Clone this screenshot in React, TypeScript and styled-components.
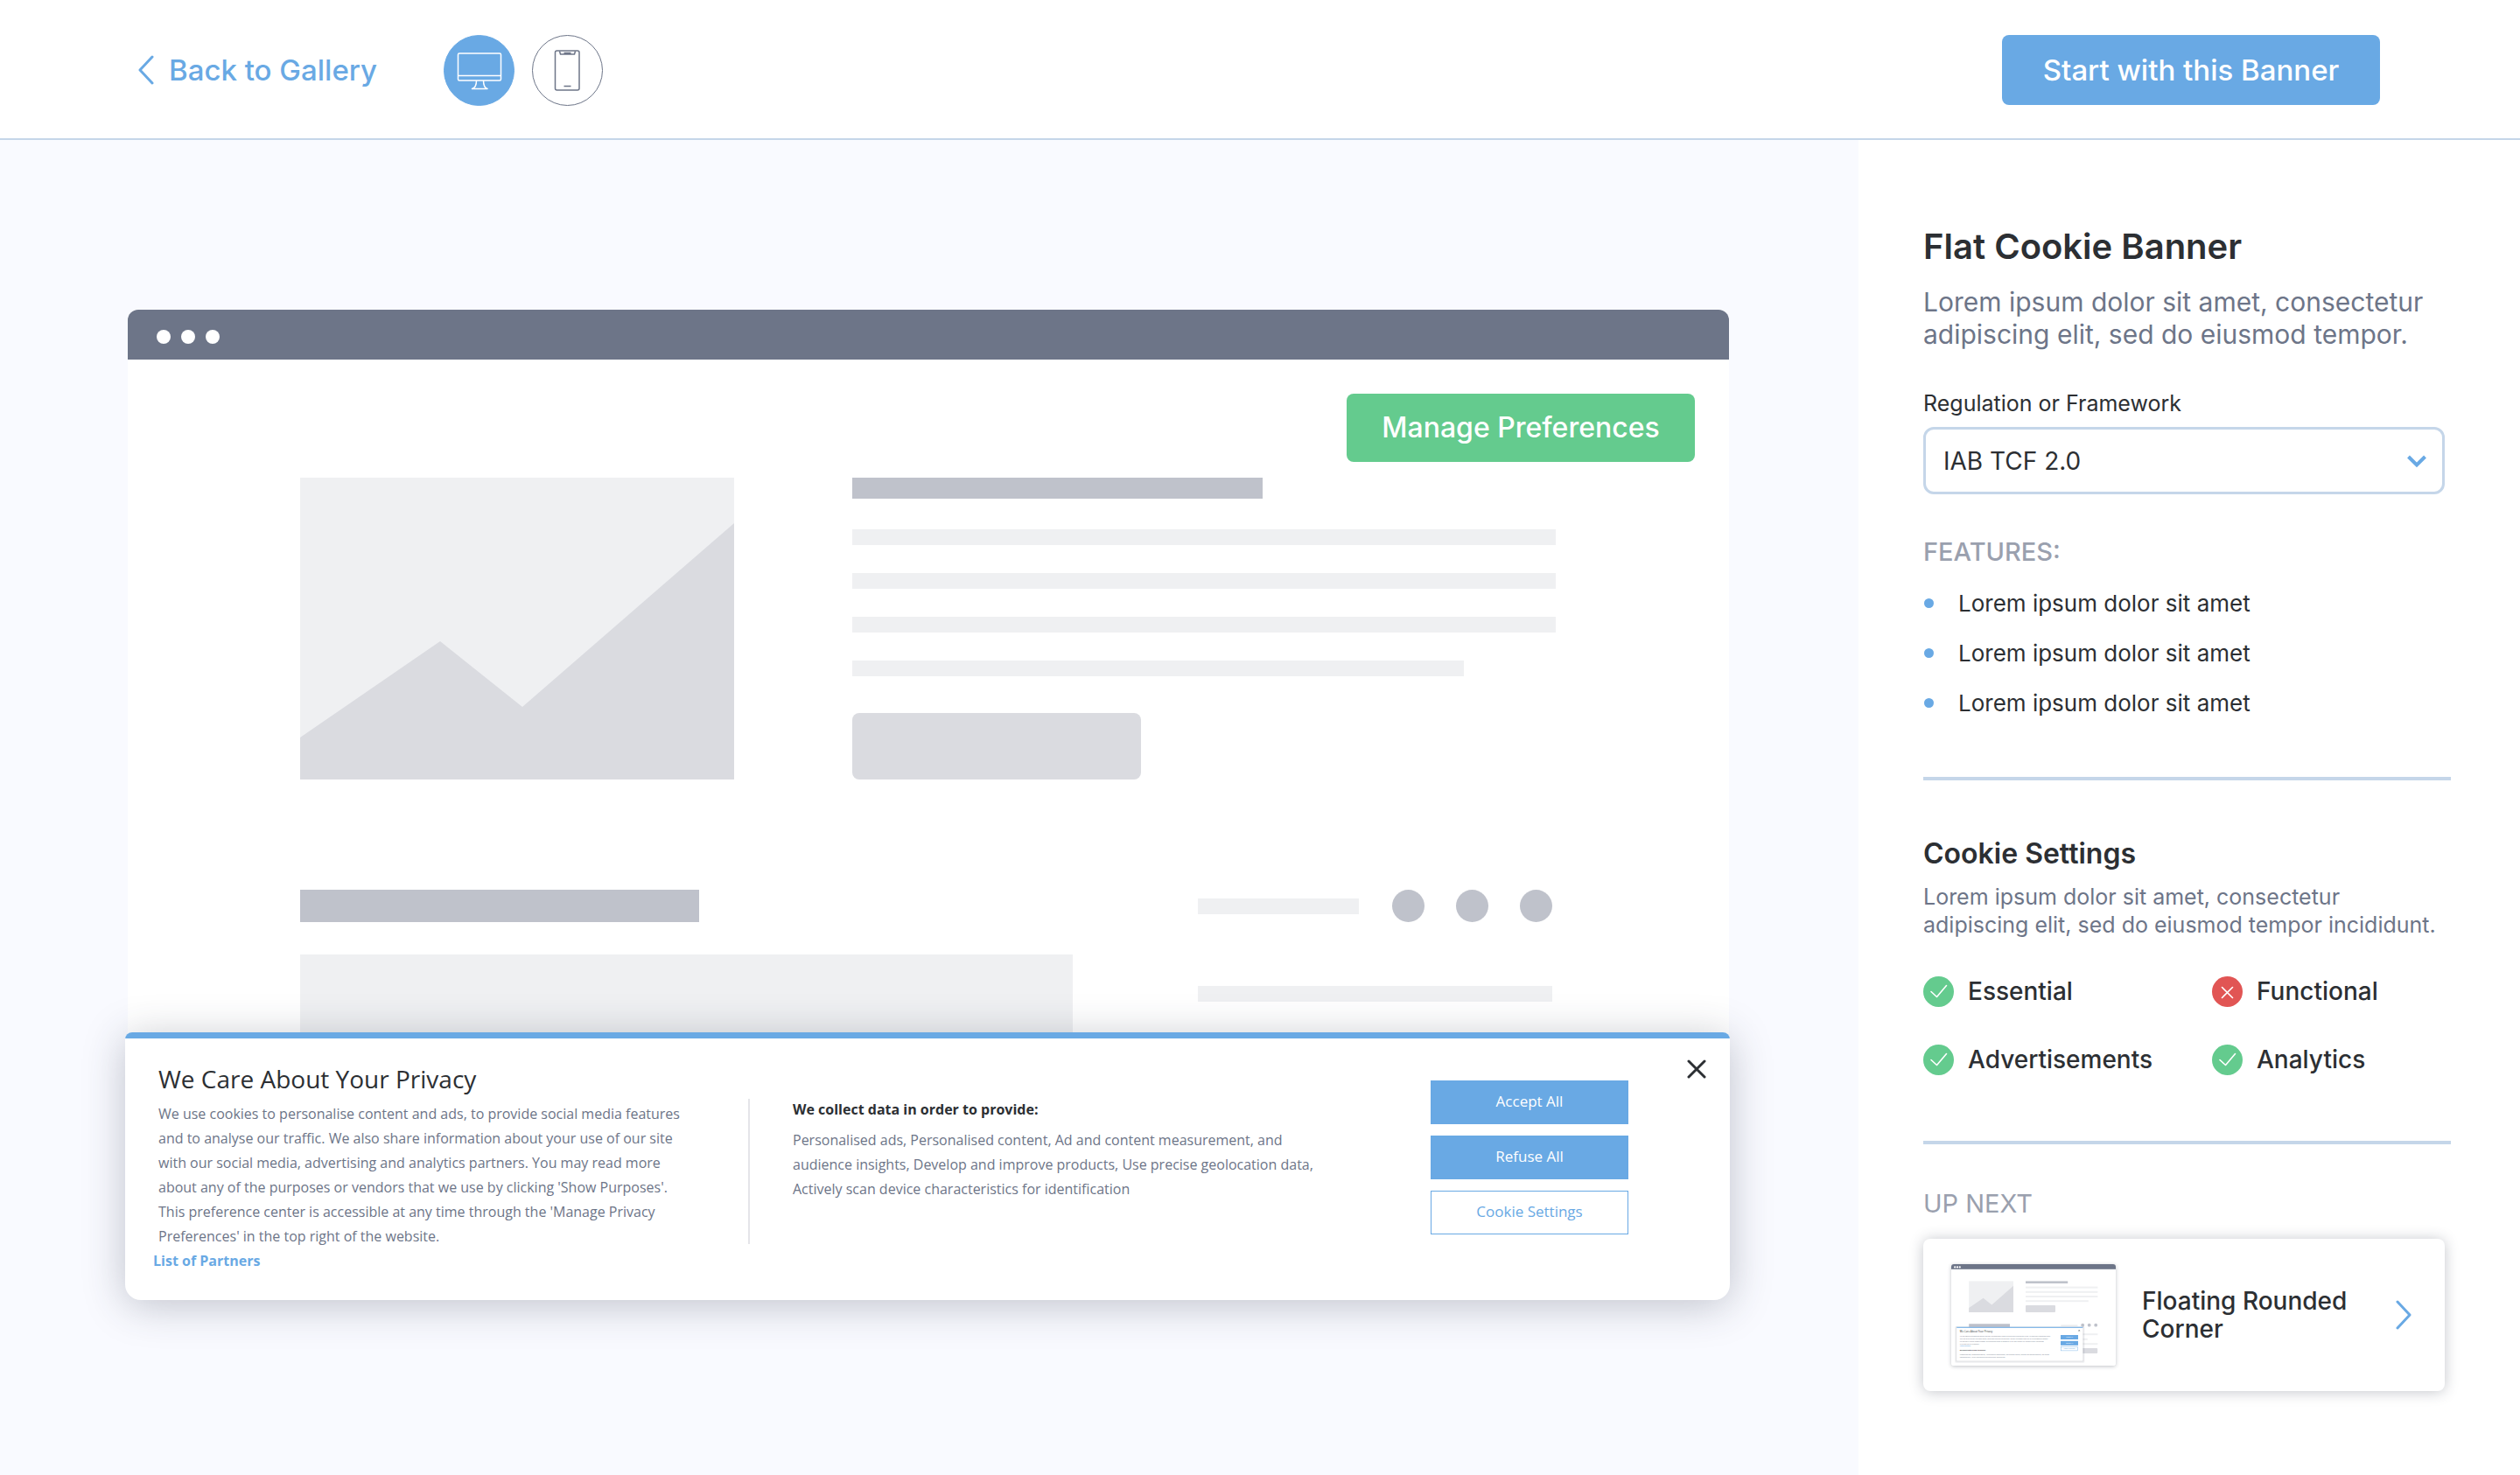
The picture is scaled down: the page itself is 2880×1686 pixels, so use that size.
import React, { useState } from 'react';
import styled, { createGlobalStyle } from 'styled-components';

const color = {
  blue: '#69a9e4',
  green: '#64cb8e',
  red: '#e15554',
  ink: '#2c2f33',
  slate: '#6d7588',
  muted: '#9aa0ae',
  line: '#c5d6e9',
  canvas: '#f9faff',
  bar: '#bfc2cb',
  block: '#dadbe0',
  pale: '#eff0f2',
};

const uiFont = 'Inter, "Liberation Sans", sans-serif';
const bannerFont = '"Open Sans", "Noto Sans", sans-serif';

const GlobalStyle = createGlobalStyle`
  *, *::before, *::after { box-sizing: border-box; }
  body { margin: 0; background: #fff; color: ${color.ink}; font-family: ${uiFont}; }
  h1, h2, h3, p, ul { margin: 0; padding: 0; }
  button { font-family: inherit; cursor: pointer; }
  svg { display: block; }
`;

const Page = styled.div`
  min-height: 100vh;
  display: flex;
  flex-direction: column;
`;

/* ---------- top bar ---------- */

const TopBar = styled.header`
  display: flex;
  align-items: center;
  justify-content: space-between;
  height: 160px;
  padding: 2px 160px 0 158px;
  border-bottom: 2px solid ${color.line};
`;

const TopBarGroup = styled.div`
  display: flex;
  align-items: center;
  gap: 76px;
`;

const BackLink = styled.a`
  display: flex;
  align-items: center;
  gap: 17px;
  color: ${color.blue};
  font-size: 33px;
  font-weight: 500;
  line-height: 40px;
  text-decoration: none;
`;

const DeviceSwitch = styled.div`
  display: flex;
  gap: 20px;
`;

const DeviceButton = styled.button<{ $active: boolean }>`
  display: flex;
  align-items: center;
  justify-content: center;
  width: 81px;
  height: 81px;
  padding: 0;
  border: 1px solid ${(p) => (p.$active ? color.blue : color.slate)};
  border-radius: 50%;
  background: ${(p) => (p.$active ? color.blue : 'transparent')};
  color: ${(p) => (p.$active ? '#fff' : color.slate)};
`;

const SolidButton = styled.button<{ $tone: 'blue' | 'green' }>`
  height: ${(p) => (p.$tone === 'blue' ? 80 : 78)}px;
  min-width: ${(p) => (p.$tone === 'blue' ? 432 : 398)}px;
  padding: 0 40px;
  border: 0;
  border-radius: 8px;
  background: ${(p) => color[p.$tone]};
  color: #fff;
  font-size: ${(p) => (p.$tone === 'blue' ? 33 : 32)}px;
  font-weight: 500;
  line-height: 40px;
`;

/* ---------- preview ---------- */

const Main = styled.main`
  flex: 1;
  display: flex;
`;

const Preview = styled.section`
  flex: 1;
  min-width: 0;
  padding: 194px 147px 64px 143px;
  background: ${color.canvas};
`;

const BrowserFrame = styled.div`
  margin: 0 1px 0 3px;
  border-radius: 12px 12px 0 0;
  background: #fff;
  overflow: hidden;
`;

const BrowserBar = styled.div`
  display: flex;
  align-items: center;
  gap: 12px;
  height: 57px;
  padding: 5px 33px 0;
  background: ${color.slate};
`;

const BrowserDot = styled.span`
  width: 16px;
  height: 16px;
  border-radius: 50%;
  background: #fff;
`;

const FrameActions = styled.div`
  display: flex;
  justify-content: flex-end;
  padding: 39px 39px 18px;
`;

const Hero = styled.div`
  display: flex;
  gap: 135px;
  padding: 0 198px 0 197px;
`;

const HeroText = styled.div`
  flex: 1;
  display: flex;
  flex-direction: column;
`;

const HeroLines = styled.div`
  display: flex;
  flex-direction: column;
  gap: 32px;
  padding: 35px 0 42px;
`;

const Bar = styled.div<{ $w: string; $h: number; $fill: string; $r?: number }>`
  width: ${(p) => p.$w};
  height: ${(p) => p.$h}px;
  border-radius: ${(p) => p.$r ?? 0}px;
  background: ${(p) => p.$fill};
`;

const Lower = styled.div`
  display: flex;
  justify-content: space-between;
  padding: 126px 202px 0 197px;
`;

const LowerColumn = styled.div<{ $w: number; $gap: number }>`
  width: ${(p) => p.$w}px;
  display: flex;
  flex-direction: column;
  gap: ${(p) => p.$gap}px;
`;

const LowerHeader = styled.div`
  display: flex;
  align-items: center;
  justify-content: space-between;
`;

const Circles = styled.div`
  display: flex;
  gap: 36px;
`;

/* ---------- consent banner ---------- */

const Banner = styled.section`
  position: relative;
  margin-top: -21px;
  border-radius: 8px 8px 18px 18px;
  background: #fff;
  box-shadow: 0 6px 48px rgba(44, 52, 70, 0.28);
  font-family: ${bannerFont};
`;

const BannerClip = styled.div`
  border-radius: inherit;
  overflow: hidden;
`;

const Stripe = styled.div`
  height: 7px;
  background: ${color.blue};
`;

const BannerBody = styled.div`
  display: flex;
  align-items: flex-start;
  padding: 27px 116px 31px 32px;
`;

const BannerIntro = styled.div`
  width: 620px;
`;

const BannerCopy = styled.div`
  display: flex;
  flex-direction: column;
  gap: 7px;
  padding: 0 6px;
`;

const BannerTitle = styled.h2`
  font-size: 28px;
  font-weight: 400;
  line-height: 38px;
`;

const BannerText = styled.p`
  color: ${color.slate};
  font-size: 16px;
  line-height: 28px;
`;

const PartnersLink = styled.a`
  display: block;
  color: ${color.blue};
  font-size: 16px;
  font-weight: 700;
  line-height: 28px;
  text-decoration: none;
`;

const BannerDivider = styled.div`
  width: 2px;
  height: 166px;
  margin: 42px 49px 0 60px;
  background: #e4e5e9;
`;

const BannerPurposes = styled.div`
  width: 610px;
  display: flex;
  flex-direction: column;
  gap: 7px;
  padding-top: 40px;
`;

const BannerSubtitle = styled.h3`
  font-size: 16px;
  font-weight: 700;
  line-height: 28px;
`;

const BannerActions = styled.div`
  display: flex;
  flex-direction: column;
  gap: 13px;
  width: 226px;
  margin-left: auto;
  padding-top: 21px;
`;

const BannerButton = styled.button<{ $outline?: boolean }>`
  height: 50px;
  padding: 0 0 2px;
  border: 1px solid ${color.blue};
  background: ${(p) => (p.$outline ? '#fff' : color.blue)};
  color: ${(p) => (p.$outline ? color.blue : '#fff')};
  font-size: 17px;
  line-height: 24px;
`;

const CloseButton = styled.button`
  position: absolute;
  top: 31px;
  right: 27px;
  padding: 0;
  border: 0;
  background: none;
  color: ${color.ink};
`;

/* ---------- sidebar ---------- */

const Sidebar = styled.aside`
  width: 756px;
  padding: 98px 79px 64px 74px;
  background: #fff;
`;

const Title = styled.h1`
  font-size: 40px;
  font-weight: 600;
  line-height: 48px;
`;

const Lead = styled.p`
  margin-top: 21px;
  max-width: 584px;
  color: ${color.slate};
  font-size: 30px;
  line-height: 37px;
`;

const Field = styled.div`
  display: flex;
  flex-direction: column;
  gap: 12px;
  max-width: 596px;
  margin-top: 45px;
`;

const FieldLabel = styled.label`
  font-size: 25px;
  line-height: 30px;
`;

const SelectBox = styled.div`
  position: relative;
`;

const Select = styled.select`
  appearance: none;
  display: block;
  width: 100%;
  height: 77px;
  padding: 0 64px 0 20px;
  border: 3px solid ${color.line};
  border-radius: 12px;
  background: #fff;
  color: ${color.ink};
  font-family: inherit;
  font-size: 28px;
`;

const SelectArrow = styled.svg`
  position: absolute;
  right: 21px;
  top: 32px;
  pointer-events: none;
`;

const Eyebrow = styled.h2<{ $top: number; $weight: number }>`
  margin-top: ${(p) => p.$top}px;
  color: ${color.muted};
  font-size: 29px;
  font-weight: ${(p) => p.$weight};
  line-height: 36px;
`;

const FeatureList = styled.ul`
  margin-top: 12px;
  list-style: none;
`;

const Feature = styled.li`
  display: flex;
  align-items: center;
  gap: 28px;
  padding-left: 1px;
  font-size: 26px;
  line-height: 57px;

  &::before {
    content: '';
    width: 11px;
    height: 11px;
    border-radius: 50%;
    background: ${color.blue};
  }
`;

const Rule = styled.hr<{ $top: number }>`
  height: 4px;
  margin: ${(p) => p.$top}px 0 0;
  border: 0;
  background: ${color.line};
`;

const SectionTitle = styled.h2`
  margin-top: 64px;
  font-size: 32px;
  font-weight: 600;
  line-height: 40px;
`;

const SectionText = styled.p`
  margin-top: 13px;
  color: ${color.slate};
  font-size: 25px;
  line-height: 32px;
`;

const SettingsGrid = styled.ul`
  display: grid;
  grid-template-columns: 330px 1fr;
  row-gap: 43px;
  margin-top: 43px;
  list-style: none;
`;

const Setting = styled.li`
  display: flex;
  align-items: center;
  gap: 16px;
  font-size: 28px;
  font-weight: 500;
  line-height: 35px;
`;

const NextCard = styled.a`
  display: flex;
  align-items: center;
  max-width: 596px;
  height: 174px;
  margin-top: 22px;
  padding: 0 38px 0 32px;
  border-radius: 8px;
  background: #fff;
  box-shadow: 0 1px 16px rgba(44, 52, 70, 0.28);
  color: ${color.ink};
  text-decoration: none;
`;

const Thumb = styled.svg`
  flex: none;
  border-radius: 3px;
  box-shadow: 0 1px 4px rgba(44, 52, 70, 0.3);
`;

const NextName = styled.span`
  width: 250px;
  margin-left: 30px;
  margin-right: auto;
  font-size: 28px;
  font-weight: 500;
  line-height: 32px;
`;

/* ---------- drawings ---------- */

const Chevron = ({ flip }: { flip?: boolean }) => (
  <svg width="18" height="34" viewBox="0 0 18 34" fill="none" stroke={color.blue} strokeWidth="3" strokeLinecap="round" strokeLinejoin="round" aria-hidden="true">
    <path d={flip ? 'M2 2 L16 17 L2 32' : 'M16 2 L2 17 L16 32'} />
  </svg>
);

const DesktopIcon = () => (
  <svg width="79" height="79" viewBox="1 1 79 79" fill="none" stroke="currentColor" strokeWidth="1.5" strokeLinejoin="round" aria-hidden="true">
    <rect x="16.5" y="21" width="49" height="31" rx="1.5" />
    <path d="M16.5 46.5 H65.5 M37.5 52 C37.5 57 36.5 60.5 32.5 61.5 H50 C46.5 60.5 45.5 57 45.5 52" />
  </svg>
);

const PhoneIcon = () => (
  <svg width="79" height="79" viewBox="1 1 79 79" fill="none" stroke="currentColor" strokeWidth="1.5" strokeLinejoin="round" aria-hidden="true">
    <rect x="26.5" y="18" width="27.5" height="45" rx="2" />
    <path d="M31.5 18.5 L32.5 22 H48.5 L49.5 18.5 M36.5 20.5 H44.5 M36.5 58.5 H44.5" />
  </svg>
);

const StatusIcon = ({ on }: { on: boolean }) => (
  <svg width="35" height="35" viewBox="0 0 35 35" fill="none" stroke="#fff" strokeWidth="1.6" strokeLinecap="round" strokeLinejoin="round" role="img" aria-label={on ? 'Enabled' : 'Disabled'}>
    <circle cx="17.5" cy="17.5" r="17.5" fill={on ? color.green : color.red} stroke="none" />
    <path d={on ? 'M9 17.5 L15.5 23.5 L26.5 10.5' : 'M11.5 12.5 L23.5 24.5 M23.5 12.5 L11.5 24.5'} />
  </svg>
);

const Picture = () => (
  <svg width="496" height="345" viewBox="0 0 496 345" aria-hidden="true">
    <rect width="496" height="345" fill={color.pale} />
    <path d="M0 297 L160 187 L254 262 L496 52 V345 H0 Z" fill={color.block} />
  </svg>
);

const NextThumb = () => (
  <Thumb width="188" height="116" viewBox="0 0 1880 1160" fontFamily={bannerFont} aria-hidden="true">
    <rect width="1880" height="1160" fill="#fff" />
    <rect width="1880" height="58" fill={color.slate} />
    <g fill="#fff">
      <circle cx="42" cy="34" r="11" />
      <circle cx="70" cy="34" r="11" />
      <circle cx="98" cy="34" r="11" />
    </g>
    <rect x="202" y="194" width="508" height="356" fill={color.pale} />
    <path d="M202 500 L366 387 L463 464 L710 248 V550 H202 Z" fill={color.block} />
    <rect x="850" y="194" width="482" height="26" fill={color.bar} />
    <g fill={color.pale}>
      <rect x="850" y="256" width="824" height="20" />
      <rect x="850" y="308" width="824" height="20" />
      <rect x="850" y="360" width="824" height="20" />
      <rect x="850" y="412" width="718" height="20" />
      <rect x="1254" y="692" width="190" height="20" />
      <rect x="1400" y="792" width="274" height="20" />
      <rect x="1400" y="848" width="158" height="20" />
      <rect x="1400" y="902" width="274" height="20" />
    </g>
    <rect x="850" y="470" width="340" height="80" rx="10" fill={color.block} />
    <rect x="1400" y="960" width="272" height="60" rx="10" fill={color.block} />
    <rect x="202" y="682" width="468" height="40" fill={color.bar} />
    <g fill={color.bar}>
      <circle cx="1502" cy="697" r="19" />
      <circle cx="1577" cy="697" r="19" />
      <circle cx="1652" cy="697" r="19" />
    </g>
    <g fill="#2c3446" opacity="0.07">
      <rect x="42" y="708" width="1482" height="420" rx="16" />
      <rect x="52" y="714" width="1462" height="402" rx="10" />
    </g>
    <rect x="52" y="714" width="1462" height="402" rx="10" fill="#2c3446" opacity="0.08" />
    <rect x="62" y="718" width="1442" height="386" rx="6" fill="#fff" />
    <rect x="62" y="718" width="1442" height="10" fill={color.blue} />
    <text x="98" y="778" fontSize="29" fill={color.ink}>We Care About Your Privacy</text>
    <path d="M1454 750 L1470 768 M1470 750 L1454 768" stroke={color.ink} strokeWidth="4" />
    <g fontSize="16" fill={color.slate}>
      <text x="98" y="834">We use cookies to personalise content and ads, to provide social media features and to analyse our traffic. We also share information about</text>
      <text x="98" y="862">your use of our site with our social media, advertising and analytics partners. You may read more about any of the purposes or vendors</text>
      <text x="98" y="890">that we use by clicking 'Show Purposes'. This preference center is accessible at any time through the 'Manage Privacy Preferences'</text>
      <text x="98" y="918">in the top right of the website.</text>
      <text x="98" y="1040">Personalised ads, Personalised content, Ad and content measurement, and audience insights, Develop and improve products, Use precise</text>
      <text x="98" y="1068">geolocation data, Actively scan device characteristics for identification</text>
    </g>
    <text x="98" y="944" fontSize="16" fontWeight="700" fill={color.blue}>List of Partners</text>
    <text x="98" y="994" fontSize="17" fontWeight="700" fill={color.ink}>We collect data in order to provide:</text>
    <rect x="1250" y="810" width="200" height="50" fill={color.blue} />
    <rect x="1250" y="878" width="200" height="50" fill={color.blue} />
    <rect x="1253" y="945" width="194" height="44" fill="#fff" stroke={color.blue} strokeWidth="4" />
    <g fontSize="18" textAnchor="middle" fill="#fff">
      <text x="1350" y="841">Accept All</text>
      <text x="1350" y="909">Refuse All</text>
      <text x="1350" y="974" fill={color.blue}>Cookie Settings</text>
    </g>
  </Thumb>
);

const settings = [
  { name: 'Essential', on: true },
  { name: 'Functional', on: false },
  { name: 'Advertisements', on: true },
  { name: 'Analytics', on: true },
];

const features = ['Lorem ipsum dolor sit amet', 'Lorem ipsum dolor sit amet', 'Lorem ipsum dolor sit amet'];

export default function App() {
  const [device, setDevice] = useState<'desktop' | 'phone'>('desktop');

  return (
    <Page>
      <GlobalStyle />
      <TopBar>
        <TopBarGroup>
          <BackLink href="#gallery">
            <Chevron />
            Back to Gallery
          </BackLink>
          <DeviceSwitch>
            <DeviceButton type="button" aria-label="Desktop preview" aria-pressed={device === 'desktop'} $active={device === 'desktop'} onClick={() => setDevice('desktop')}>
              <DesktopIcon />
            </DeviceButton>
            <DeviceButton type="button" aria-label="Phone preview" aria-pressed={device === 'phone'} $active={device === 'phone'} onClick={() => setDevice('phone')}>
              <PhoneIcon />
            </DeviceButton>
          </DeviceSwitch>
        </TopBarGroup>
        <SolidButton type="button" $tone="blue">Start with this Banner</SolidButton>
      </TopBar>

      <Main>
        <Preview>
          <BrowserFrame>
            <BrowserBar>
              <BrowserDot />
              <BrowserDot />
              <BrowserDot />
            </BrowserBar>
            <FrameActions>
              <SolidButton type="button" $tone="green">Manage Preferences</SolidButton>
            </FrameActions>
            <Hero>
              <Picture />
              <HeroText>
                <Bar $w="469px" $h={24} $fill={color.bar} />
                <HeroLines>
                  <Bar $w="100%" $h={18} $fill={color.pale} />
                  <Bar $w="100%" $h={18} $fill={color.pale} />
                  <Bar $w="100%" $h={18} $fill={color.pale} />
                  <Bar $w="87%" $h={18} $fill={color.pale} />
                </HeroLines>
                <Bar $w="41%" $h={76} $fill={color.block} $r={8} />
              </HeroText>
            </Hero>
            <Lower>
              <LowerColumn $w={883} $gap={37}>
                <Bar $w="456px" $h={37} $fill={color.bar} />
                <Bar $w="100%" $h={110} $fill={color.pale} />
              </LowerColumn>
              <LowerColumn $w={405} $gap={73}>
                <LowerHeader>
                  <Bar $w="184px" $h={18} $fill={color.pale} />
                  <Circles>
                    <Bar $w="37px" $h={37} $fill={color.bar} $r={19} />
                    <Bar $w="37px" $h={37} $fill={color.bar} $r={19} />
                    <Bar $w="37px" $h={37} $fill={color.bar} $r={19} />
                  </Circles>
                </LowerHeader>
                <Bar $w="100%" $h={18} $fill={color.pale} />
              </LowerColumn>
            </Lower>
          </BrowserFrame>

          <Banner aria-label="Cookie consent">
            <BannerClip>
              <Stripe />
              <BannerBody>
                <BannerIntro>
                  <BannerCopy>
                    <BannerTitle>We Care About Your Privacy</BannerTitle>
                    <BannerText>
                      We use cookies to personalise content and ads, to provide social media features and to analyse our
                      traffic. We also share information about your use of our site with our social media, advertising
                      and analytics partners. You may read more about any of the purposes or vendors that we use by
                      clicking 'Show Purposes'. This preference center is accessible at any time through the 'Manage
                      Privacy Preferences' in the top right of the website.
                    </BannerText>
                  </BannerCopy>
                  <PartnersLink href="#partners">List of Partners</PartnersLink>
                </BannerIntro>
                <BannerDivider />
                <BannerPurposes>
                  <BannerSubtitle>We collect data in order to provide:</BannerSubtitle>
                  <BannerText>
                    Personalised ads, Personalised content, Ad and content measurement, and audience insights, Develop
                    and improve products, Use precise geolocation data, Actively scan device characteristics for
                    identification
                  </BannerText>
                </BannerPurposes>
                <BannerActions>
                  <BannerButton type="button">Accept All</BannerButton>
                  <BannerButton type="button">Refuse All</BannerButton>
                  <BannerButton type="button" $outline>Cookie Settings</BannerButton>
                </BannerActions>
              </BannerBody>
            </BannerClip>
            <CloseButton type="button" aria-label="Close">
              <svg width="22" height="22" viewBox="0 0 22 22" stroke="currentColor" strokeWidth="3" strokeLinecap="round" aria-hidden="true">
                <path d="M2 2 L20 20 M20 2 L2 20" />
              </svg>
            </CloseButton>
          </Banner>
        </Preview>

        <Sidebar>
          <Title>Flat Cookie Banner</Title>
          <Lead>Lorem ipsum dolor sit amet, consectetur adipiscing elit, sed do eiusmod tempor.</Lead>
          <Field>
            <FieldLabel htmlFor="framework">Regulation or Framework</FieldLabel>
            <SelectBox>
              <Select id="framework" defaultValue="iab">
                <option value="iab">IAB TCF 2.0</option>
              </Select>
              <SelectArrow width="22" height="15" viewBox="0 0 22 15" fill="none" stroke={color.blue} strokeWidth="4" aria-hidden="true">
                <path d="M1.5 2 L11 11.5 L20.5 2" />
              </SelectArrow>
            </SelectBox>
          </Field>
          <Eyebrow $top={48} $weight={500}>FEATURES:</Eyebrow>
          <FeatureList>
            {features.map((text, i) => (
              <Feature key={i}>{text}</Feature>
            ))}
          </FeatureList>
          <Rule $top={56} />
          <SectionTitle>Cookie Settings</SectionTitle>
          <SectionText>Lorem ipsum dolor sit amet, consectetur adipiscing elit, sed do eiusmod tempor incididunt.</SectionText>
          <SettingsGrid>
            {settings.map((s) => (
              <Setting key={s.name}>
                <StatusIcon on={s.on} />
                {s.name}
              </Setting>
            ))}
          </SettingsGrid>
          <Rule $top={75} />
          <Eyebrow $top={50} $weight={400}>UP NEXT</Eyebrow>
          <NextCard href="#floating-rounded-corner">
            <NextThumb />
            <NextName>Floating Rounded Corner</NextName>
            <Chevron flip />
          </NextCard>
        </Sidebar>
      </Main>
    </Page>
  );
}
